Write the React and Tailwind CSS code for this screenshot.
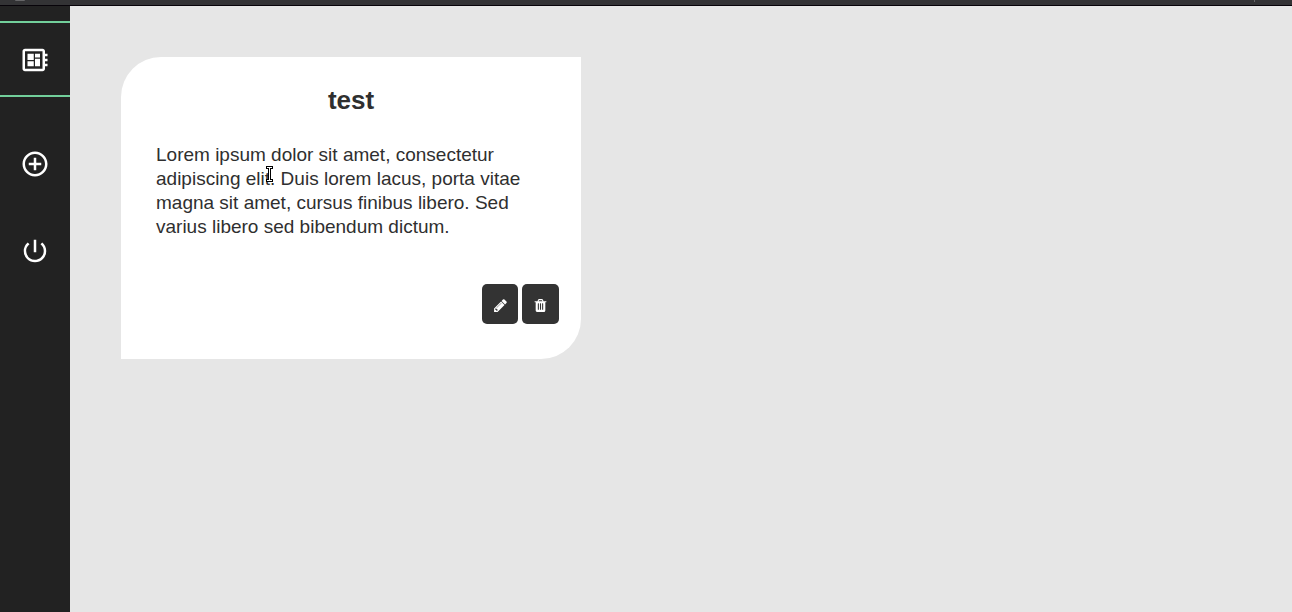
import { MdOutlineDeveloperBoard, MdControlPoint, MdPowerSettingsNew } from "react-icons/md";

function Sidebar() {
  return (
    <nav aria-label="Main" className="flex w-[70px] shrink-0 flex-col bg-[#222222] pt-[15px] text-white">
      <a href="#board" aria-label="Board" className="flex h-[76px] items-center justify-center border-y-2 border-[#72cf9b] pt-0.5">
        <MdOutlineDeveloperBoard size={30} />
      </a>
      <button type="button" aria-label="Add note" className="mt-[29px] flex h-[76px] items-center justify-center">
        <MdControlPoint size={30} />
      </button>
      <button type="button" aria-label="Log out" className="mt-[11px] flex h-[76px] items-center justify-center">
        <MdPowerSettingsNew size={30} />
      </button>
    </nav>
  );
}

function PencilIcon() {
  return (
    <svg aria-hidden="true" viewBox="0 0 1792 1792" fill="currentColor" className="size-[15px]">
      <path d="M491 1536l91-91-235-235-91 91v107h128v128h107zm523-928q0-22-22-22-10 0-17 7l-542 542q-7 7-7 17 0 22 22 22 10 0 17-7l542-542q7-7 7-17zm-54-192l416 416-832 832h-416v-416zm683 96q0 53-37 90l-166 166-416-416 166-165q36-38 90-38 53 0 91 38l235 234q37 39 37 91z" />
    </svg>
  );
}

function TrashIcon() {
  return (
    <svg aria-hidden="true" viewBox="0 0 1792 1792" fill="currentColor" className="size-[15px]">
      <path d="M704 1376v-704q0-14-9-23t-23-9h-64q-14 0-23 9t-9 23v704q0 14 9 23t23 9h64q14 0 23-9t9-23zm256 0v-704q0-14-9-23t-23-9h-64q-14 0-23 9t-9 23v704q0 14 9 23t23 9h64q14 0 23-9t9-23zm256 0v-704q0-14-9-23t-23-9h-64q-14 0-23 9t-9 23v704q0 14 9 23t23 9h64q14 0 23-9t9-23zm-544-992h448l-48-117q-7-9-17-11h-317q-10 2-17 11zm928 32v64q0 14-9 23t-23 9h-96v948q0 83-47 143.500t-113 60.500h-832q-66 0-113-58.500t-47-141.500v-952h-96q-14 0-23-9t-9-23v-64q0-14 9-23t23-9h309l70-167q15-37 54-63t79-26h320q40 0 79 26t54 63l70 167h309q14 0 23 9t9 23z" />
    </svg>
  );
}

function TextCursor() {
  return (
    <svg aria-hidden="true" viewBox="0 0 7 16" className="absolute top-[23px] left-[110px] h-4 w-[7px]">
      <path d="M0 0H7V3H5V13H7V16H0V13H2V3H0Z" fill="#000" />
      <path d="M1 1H6V2H4V14H6V15H1V14H3V2H1Z" fill="#fff" />
    </svg>
  );
}

function Note({ title, text }) {
  return (
    <article className="w-[460px] rounded-tl-[40px] rounded-br-[40px] bg-white px-[35px] pt-7 pb-[35px] text-[#2f2f2f]">
      <h2 className="text-center text-[26px] leading-[30px] font-bold">{title}</h2>
      <div className="relative mt-7">
        <p className="text-[19px] leading-6">{text}</p>
        <TextCursor />
      </div>
      <div className="-mr-[13px] mt-[45px] flex justify-end gap-1 text-white">
        <button type="button" aria-label="Edit" className="flex h-10 w-9 items-center justify-center rounded-[5px] bg-[#333333] pt-0.5">
          <PencilIcon />
        </button>
        <button type="button" aria-label="Delete" className="flex h-10 w-[37px] items-center justify-center rounded-[5px] bg-[#333333] pt-0.5">
          <TrashIcon />
        </button>
      </div>
    </article>
  );
}

export default function App() {
  return (
    <div className="flex min-h-screen flex-col bg-[#e6e6e6] font-['Liberation_Sans',Arial,sans-serif]">
      <div className="flex h-[6px] items-start justify-between border-b border-[#070309] bg-[#333335] pr-[37px] pl-[15px]">
        <span className="h-px w-[10px] rounded-b-full bg-[#666668]" />
        <span className="h-[2px] w-px bg-[#666668]" />
      </div>
      <div className="flex grow">
        <Sidebar />
        <main className="grow px-[51px] py-[51px]">
          <Note
            title="test"
            text="Lorem ipsum dolor sit amet, consectetur adipiscing elit. Duis lorem lacus, porta vitae magna sit amet, cursus finibus libero. Sed varius libero sed bibendum dictum."
          />
        </main>
      </div>
    </div>
  );
}
